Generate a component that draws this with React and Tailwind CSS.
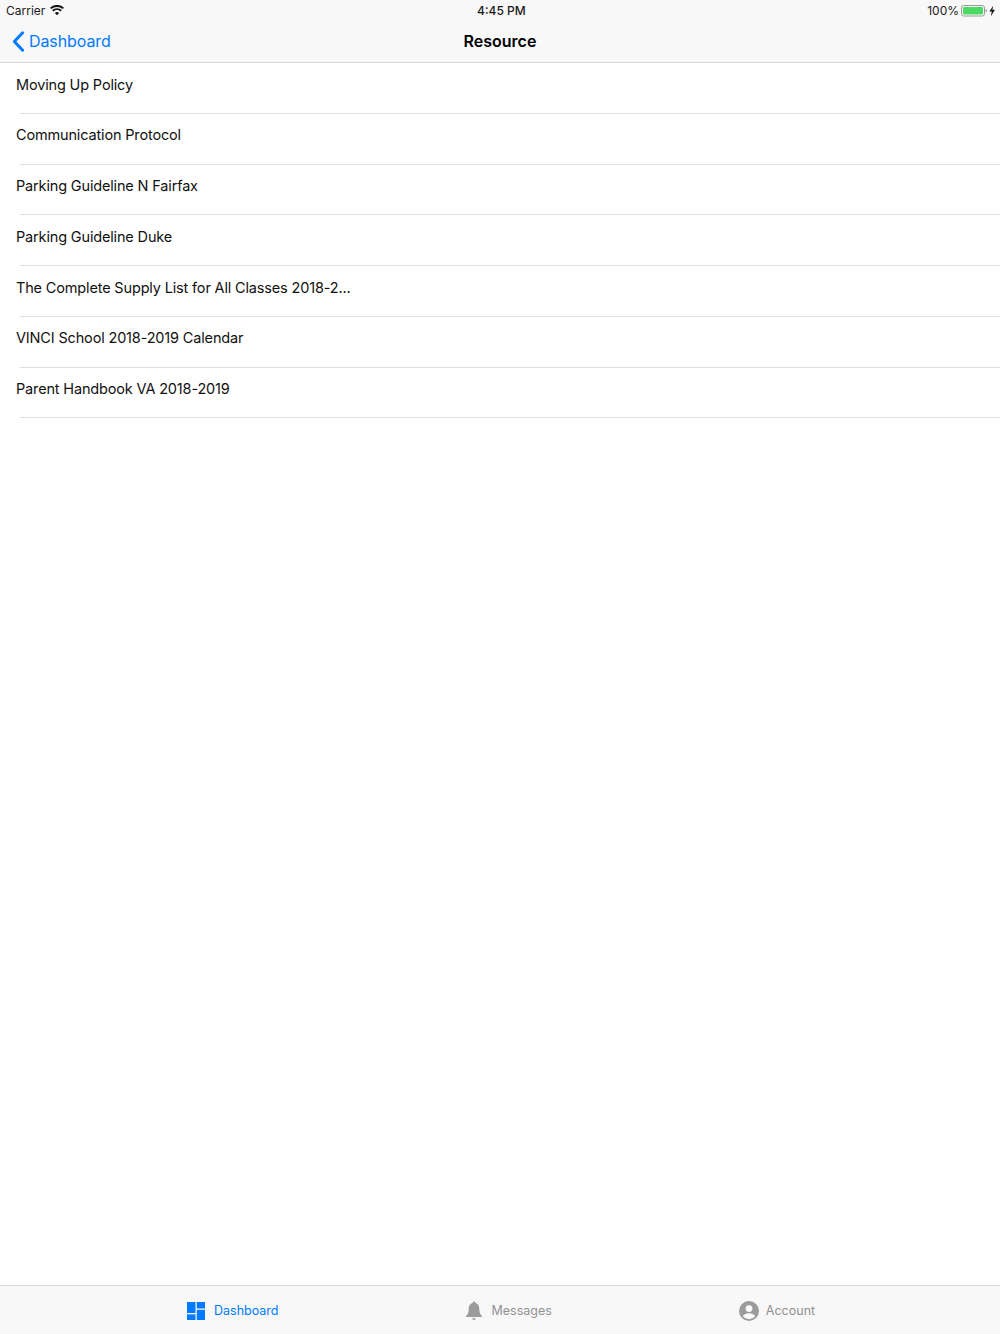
const rows = [
  "Moving Up Policy",
  "Communication Protocol",
  "Parking Guideline N Fairfax",
  "Parking Guideline Duke",
  "The Complete Supply List for All Classes 2018-2...",
  "VINCI School 2018-2019 Calendar",
  "Parent Handbook VA 2018-2019",
];

function Wifi() {
  return (
    <svg width="14" height="11" viewBox="0 0 15 11" className="ml-[5px] mb-[1px]">
      <path d="M7.5 10.6 5.2 8.1a3.4 3.4 0 0 1 4.6 0Z" fill="#111" />
      <path d="M3.7 6.5 2.3 5a7.8 7.8 0 0 1 10.4 0l-1.4 1.5a5.7 5.7 0 0 0-7.6 0Z" fill="#111" />
      <path d="M1.4 4 0 2.5a11 11 0 0 1 15 0L13.6 4a9 9 0 0 0-12.2 0Z" fill="#111" />
    </svg>
  );
}

function Battery() {
  return (
    <svg width="34" height="12" viewBox="0 0 34 12">
      <rect x="0.5" y="0.5" width="23" height="10.5" rx="2.2" fill="none" stroke="#9a9a9a" />
      <rect x="2" y="2" width="20" height="7.5" rx="1" fill="#4cd964" />
      <rect x="24.5" y="4.2" width="1.2" height="3" fill="#9a9a9a" />
      <path d="M32.2 0.8 28.4 6.6h2.400l-.9 4.600 4-6.400h-2.500Z" fill="#111" />
    </svg>
  );
}

function Chevron() {
  return (
    <svg width="13" height="21" viewBox="0 0 13 21">
      <path d="M10.6 1.8 2.4 10.5l8.2 8.7" fill="none" stroke="#007aff" strokeWidth="3" strokeLinecap="round" strokeLinejoin="round" />
    </svg>
  );
}

function DashIcon() {
  return (
    <svg width="18" height="18" viewBox="0 0 18 18" className="shrink-0">
      <rect x="0" y="0" width="8.5" height="11" fill="#007aff" />
      <rect x="9.8" y="0" width="8.2" height="6.5" fill="#007aff" />
      <rect x="0" y="12.3" width="8.5" height="5.7" fill="#007aff" />
      <rect x="9.8" y="7.8" width="8.2" height="10.2" fill="#007aff" />
    </svg>
  );
}

function BellIcon() {
  return (
    <svg width="18" height="20" viewBox="0 0 18 20" className="shrink-0">
      <path d="M9 0.5c.9 0 1.4.6 1.4 1.500 2.700.7 3.900 2.900 3.900 5.700 0 3.600.6 5.600 2.700 7.300v1H1v-1c2.100-1.700 2.700-3.700 2.700-7.300 0-2.800 1.200-5 3.900-5.700C7.600 1.100 8.100.5 9 .5Z" fill="#9b9b9b" />
      <path d="M7.2 17.300h3.600a1.800 1.800 0 0 1-3.600 0Z" fill="#9b9b9b" />
    </svg>
  );
}

function AccountIcon() {
  return (
    <svg width="20" height="20" viewBox="0 0 20 20" className="shrink-0">
      <circle cx="10" cy="10" r="10" fill="#9b9b9b" />
      <circle cx="10" cy="7.600" r="3.400" fill="#fafafa" />
      <path d="M3.800 15.200c1-2 3.500-3 6.200-3s5.200 1 6.200 3a8 8 0 0 1-12.400 0Z" fill="#fafafa" />
    </svg>
  );
}

export default function App() {
  return (
    <div className="flex flex-col h-[1334px] w-[1000px] bg-white overflow-hidden font-['Inter','Liberation_Sans',sans-serif]">
      <header className="bg-[#f8f8f8] border-b border-[#d9d9d9] h-[63px] shrink-0 flex flex-col">
        <div className="relative h-[20px] pt-[1px] flex items-center justify-between pl-[6px] pr-[5px] text-[12px] text-[#1a1a1a]">
          <div className="flex items-center">
            <span>Carrier</span>
            <Wifi />
          </div>
          <span className="absolute left-[477px] top-[3px] font-medium leading-[15px]">4:45 PM</span>
          <div className="flex items-center gap-[2px]">
            <span>100%</span>
            <Battery />
          </div>
        </div>
        <div className="relative flex-1 flex items-center justify-center">
          <div className="absolute left-[12px] top-[10px] flex items-center gap-[4px] text-[#007aff] text-[16px] tracking-[-0.1px] leading-[22px]">
            <Chevron />
            <span>Dashboard</span>
          </div>
          <h1 className="text-[16px] font-semibold text-black">Resource</h1>
        </div>
      </header>
      <main className="flex-1">
        {rows.map((r) => (
          <div key={r} className="h-[50.75px] pl-[16px] pt-[10.5px] relative">
            <p className="text-[14.5px] tracking-[-0.16px] leading-[21px] text-[#111]">{r}</p>
            <div className="absolute left-[20px] right-0 bottom-0 h-px bg-[#dedede]" />
          </div>
        ))}
      </main>
      <nav className="h-[49px] shrink-0 bg-[#f8f8f8] border-t border-[#d9d9d9] flex items-center pl-[187px] gap-[187px] text-[12.5px] pt-[1px]">
        <div className="flex items-center gap-[9px] text-[#007aff]">
          <DashIcon />
          <span className="mt-[1px]">Dashboard</span>
        </div>
        <div className="flex items-center gap-[8px] text-[#929292]">
          <BellIcon />
          <span className="mt-[1px]">Messages</span>
        </div>
        <div className="flex items-center gap-[7px] text-[#929292]">
          <AccountIcon />
          <span className="mt-[1px]">Account</span>
        </div>
      </nav>
    </div>
  );
}
